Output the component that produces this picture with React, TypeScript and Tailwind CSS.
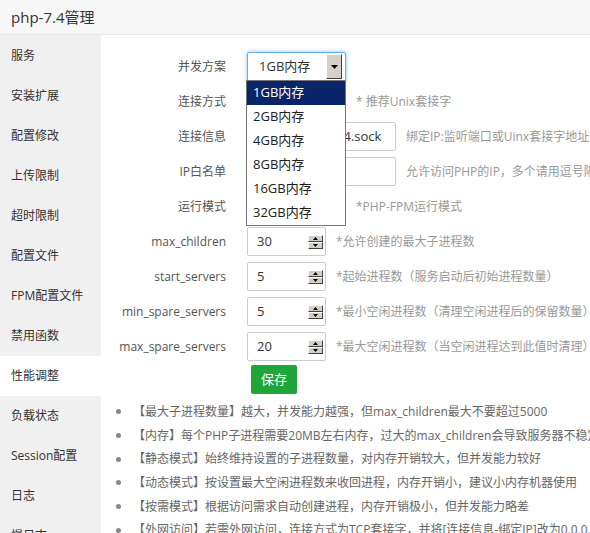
import type { ReactNode } from 'react'

const menu = [
  '服务',
  '安装扩展',
  '配置修改',
  '上传限制',
  '超时限制',
  '配置文件',
  'FPM配置文件',
  '禁用函数',
  '性能调整',
  '负载状态',
  'Session配置',
  '日志',
  '慢日志',
]

const plans = ['1GB内存', '2GB内存', '4GB内存', '8GB内存', '16GB内存', '32GB内存']

const tips = [
  '【最大子进程数量】越大，并发能力越强，但max_children最大不要超过5000',
  '【内存】每个PHP子进程需要20MB左右内存，过大的max_children会导致服务器不稳定',
  '【静态模式】始终维持设置的子进程数量，对内存开销较大，但并发能力较好',
  '【动态模式】按设置最大空闲进程数来收回进程，内存开销小，建议小内存机器使用',
  '【按需模式】根据访问需求自动创建进程，内存开销极小，但并发能力略差',
  '【外网访问】若需外网访问，连接方式为TCP套接字，并将[连接信息-绑定IP]改为0.0.0.0',
]

function Row({ label, children, hint }: { label: string; children: ReactNode; hint?: string }) {
  return (
    <div className="flex h-[35px] items-center whitespace-nowrap">
      <div className="w-[125px] shrink-0 text-right text-[12px] text-[#555]">{label}</div>
      <div className="ml-[21px] shrink-0">{children}</div>
      {hint ? <div className="ml-[10px] text-[12px] text-[#999]">{hint}</div> : null}
    </div>
  )
}

function ClassicSelect({ value, focused }: { value: string; focused?: boolean }) {
  return (
    <div
      className={
        focused
          ? 'flex h-[30px] w-[99px] items-center rounded-[2px] border border-[#66afe9] bg-white shadow-[0_0_4px_rgba(102,175,233,0.8)]'
          : 'flex h-[30px] w-[99px] items-center rounded-[2px] border border-[#ccc] bg-white'
      }
    >
      <span className="flex-1 pl-[11px] text-[13px] text-[#333]">{value}</span>
      <span className="mr-[3px] flex h-[25px] w-[16px] items-center justify-center border border-t-white border-l-white border-r-[#404040] border-b-[#404040] bg-[#d4d0c8]">
        <svg width="7" height="4" viewBox="0 0 7 4">
          <path d="M0 0h7L3.5 4z" fill="#000" />
        </svg>
      </span>
    </div>
  )
}

function SpinBtn({ up }: { up?: boolean }) {
  return (
    <span className="flex h-[7px] w-[15px] items-center justify-center border border-t-white border-l-white border-r-[#404040] border-b-[#404040] bg-[#d4d0c8]">
      <svg width="5" height="3" viewBox="0 0 5 3">
        <path d={up ? 'M0 3h5L2.5 0z' : 'M0 0h5L2.5 3z'} fill="#000" />
      </svg>
    </span>
  )
}

function NumInput({ value }: { value: string }) {
  return (
    <div className="flex h-[29px] w-[79px] items-center rounded-[2px] border border-[#ccc] bg-white">
      <span className="flex-1 pl-[9px] text-[13px] text-[#333]">{value}</span>
      <span className="mr-[2px] flex flex-col">
        <SpinBtn up />
        <SpinBtn />
      </span>
    </div>
  )
}

function TextInput({ value }: { value: string }) {
  return (
    <div className="flex h-[29px] w-[149px] items-center overflow-hidden rounded-[2px] border border-[#ccc] bg-white pl-[5px] text-[13px] text-[#333]">
      {value}
    </div>
  )
}

export default function App() {
  return (
    <div
      className="flex h-[533px] w-[590px] flex-col overflow-hidden bg-white"
      style={{ fontFamily: '"Open Sans", "Noto Sans CJK SC", sans-serif' }}
    >
      <div className="flex h-[35px] shrink-0 items-center border-b border-[#e8e8e8] bg-[#f7f7f7] pl-[11px] text-[15px] text-[#333]">
        php-7.4管理
      </div>
      <div className="flex min-h-0 flex-1">
        <div className="w-[101px] shrink-0 bg-[#f0f0f0] pt-[1px]">
          {menu.map((m) => (
            <div
              key={m}
              className={
                m === '性能调整'
                  ? 'flex h-[40px] items-center bg-white pl-[11px] text-[12px] text-[#333]'
                  : 'flex h-[40px] items-center pl-[11px] text-[12px] text-[#333]'
              }
            >
              {m}
            </div>
          ))}
        </div>
        <div className="relative min-w-0 flex-1 overflow-hidden pt-[14px]">
          <Row label="并发方案">
            <ClassicSelect value="1GB内存" focused />
          </Row>
          <Row label="连接方式" hint="* 推荐Unix套接字">
            <ClassicSelect value="Unix套接字" />
          </Row>
          <Row label="连接信息" hint="绑定IP:监听端口或Uinx套接字地址">
            <TextInput value="/tmp/php-cgi-74.sock" />
          </Row>
          <Row label="IP白名单" hint="允许访问PHP的IP，多个请用逗号隔开">
            <TextInput value="" />
          </Row>
          <Row label="运行模式" hint="*PHP-FPM运行模式">
            <ClassicSelect value="静态" />
          </Row>
          <Row label="max_children" hint="*允许创建的最大子进程数">
            <NumInput value="30" />
          </Row>
          <Row label="start_servers" hint="*起始进程数（服务启动后初始进程数量）">
            <NumInput value="5" />
          </Row>
          <Row label="min_spare_servers" hint="*最小空闲进程数（清理空闲进程后的保留数量）">
            <NumInput value="5" />
          </Row>
          <Row label="max_spare_servers" hint="*最大空闲进程数（当空闲进程达到此值时清理）">
            <NumInput value="20" />
          </Row>
          <div className="mt-[1px] pl-[150px]">
            <button
              type="button"
              className="h-[29px] w-[46px] rounded-[2px] bg-[#20a53a] text-[13px] text-white"
            >
              保存
            </button>
          </div>
          <ul className="mt-[6px] pl-[15px]">
            {tips.map((t) => (
              <li key={t} className="flex h-[23.7px] items-center whitespace-nowrap text-[12px] text-[#666]">
                <span className="mr-[12px] h-[5px] w-[5px] shrink-0 rounded-full bg-[#888]" />
                {t}
              </li>
            ))}
          </ul>

          <div className="absolute left-[145px] top-[45px] w-[100px] border border-[#767676] bg-white">
            {plans.map((p, i) => (
              <div
                key={p}
                className={
                  i === 0
                    ? 'flex h-[24px] items-center bg-[#0a246a] pl-[6px] text-[13px] text-white'
                    : 'flex h-[24px] items-center pl-[6px] text-[13px] text-[#222]'
                }
              >
                {p}
              </div>
            ))}
          </div>
        </div>
      </div>
    </div>
  )
}
